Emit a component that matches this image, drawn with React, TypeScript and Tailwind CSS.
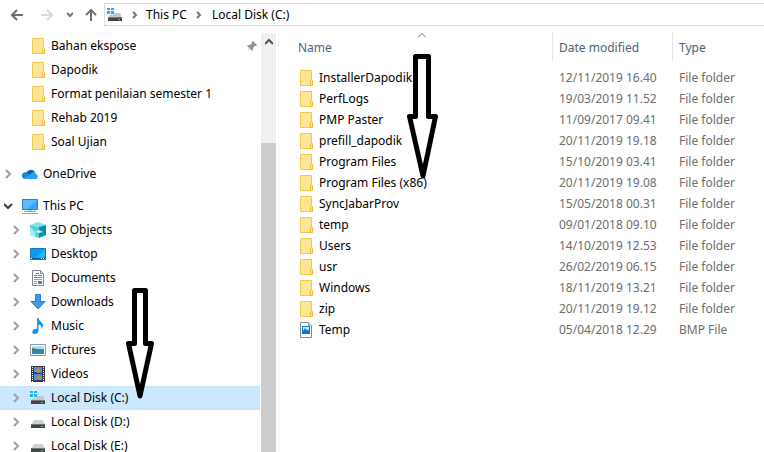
import React from "react";
import clsx from "clsx";

const folders = [
  { name: "InstallerDapodik", date: "12/11/2019 16.40" },
  { name: "PerfLogs", date: "19/03/2019 11.52" },
  { name: "PMP Paster", date: "11/09/2017 09.41" },
  { name: "prefill_dapodik", date: "20/11/2019 19.18" },
  { name: "Program Files", date: "15/10/2019 03.41" },
  { name: "Program Files (x86)", date: "20/11/2019 19.08" },
  { name: "SyncJabarProv", date: "15/05/2018 00.31" },
  { name: "temp", date: "09/01/2018 09.10" },
  { name: "Users", date: "14/10/2019 12.53" },
  { name: "usr", date: "26/02/2019 06.15" },
  { name: "Windows", date: "18/11/2019 13.21" },
  { name: "zip", date: "20/11/2019 19.12" },
  { name: "Temp", date: "05/04/2018 12.29", type: "BMP File" },
];

const quickAccess = [
  "Bahan ekspose",
  "Dapodik",
  "Format penilaian semester 1",
  "Rehab 2019",
  "Soal Ujian",
];

const Icon = ({ children }: { children: React.ReactNode }) => (
  <svg
    width="16"
    height="16"
    viewBox="0 0 16 16"
    className="shrink-0"
    aria-hidden="true"
  >
    {children}
  </svg>
);

const FolderIcon = () => (
  <Icon>
    <path d="M1.500 .5h11v15h-11z" fill="#ffe596" stroke="#efc84e" />
    <path d="M11.500 15.500v-5l1-1 1 1v5z" fill="#ffe596" stroke="#e8bd3f" />
  </Icon>
);

const BmpIcon = () => (
  <Icon>
    <path d="M1.500 .5h8l3 3v12h-11z" fill="#fff" stroke="#8a8a8a" />
    <path d="M9.500 .5v3h3" fill="#ddd" stroke="#a5a5a5" />
    <path d="M3 4h8v8H3z" fill="#0b78d4" />
    <path d="M4 5h6v2L9 9 8 7 7 8 6 6 4 9z" fill="#cde9ff" />
  </Icon>
);

const OneDriveIcon = () => (
  <Icon>
    <path d="M4 7a5 4.500 0 0 1 9-1l-4 4z" fill="#0f5fb8" />
    <path d="M1 12a3.200 3.200 0 0 1 3-5.500c2 0 3 1 5 2.500L3 13z" fill="#1684d8" />
    <path d="M8 9c1-3 5-4 6-1a2.600 2.600 0 0 1 0 5H3c-1 0-2-.5-2-1z" fill="#2ba3ee" />
  </Icon>
);

const ComputerIcon = () => (
  <Icon>
    <path d="M.5 1.500h15v10H.5z" fill="#5dbcff" stroke="#3c7ba8" />
    <path d="M15 2v9H5z" fill="#38a8f8" />
    <path d="M6 12h4v1H6z" fill="#bfd3e0" />
    <path d="M2 13.500h12M0 15.500h16" stroke="#8da0ae" />
  </Icon>
);

const ObjectsIcon = () => (
  <Icon>
    <path d="M0 3l8-3 8 3-7 2z" fill="#7fe3ee" />
    <path d="M0 3l9 2v11l-9-3z" fill="#54cfdc" />
    <path d="M16 3L9 5v11l7-3z" fill="#0a8fa6" />
    <path d="M0 5l5 5v5l-5-2z" fill="#a5edf2" />
    <path d="M5 10l4-2 4 2-4 1z" fill="#c2f5f8" />
  </Icon>
);

const DesktopIcon = () => (
  <Icon>
    <path d="M.5 2.500h15v11H.5z" fill="#0b9bf8" stroke="#1775b8" />
    <path d="M15 3v8L6 12z" fill="#2cb0ff" />
    <path d="M1 12h14v1H1z" fill="#155a91" />
    <path d="M1 12h1v1H1zM11 12h1v1h-1zM13 12h1v1h-1z" fill="#fff" />
  </Icon>
);

const DocumentIcon = () => (
  <Icon>
    <path d="M2.500 .5h8l3 3v12h-11z" fill="#fff" stroke="#7d8a92" />
    <path d="M10.500 .5v3h3" fill="#e8e8e8" stroke="#7d8a92" />
    <path d="M6 3.500h3M4 5.500h3M8 5.500h4M4 7.500h8" stroke="#2c97dc" />
    <path d="M4 9.500h8M4 11.500h3M4 13.500h3" stroke="#6caed8" />
    <path d="M8 11h4v3H8z" fill="#577f93" />
  </Icon>
);

const DownloadIcon = () => (
  <Icon>
    <path d="M5.500 .5h5v7H15L8 15 1 7.500h4.500z" fill="#3d9be9" stroke="#2b7fc8" />
  </Icon>
);

const MusicIcon = () => (
  <Icon>
    <path
      d="M7 0h1.500c0 3 4.500 4 4.500 7.500 0 2-1 3-1.500 3.500.5-3-1-4-3-4.500V13c0 2-2 3-4 3S2 14.500 2.500 13 5 10.500 7 11z"
      fill="#0d97f0"
    />
  </Icon>
);

const PictureIcon = () => (
  <Icon>
    <path d="M.5 2.500h15v11H.5z" fill="#fff" stroke="#8c989f" />
    <path d="M2 4h12v8H2z" fill="#a9dcf8" />
    <path d="M2 6c3 0 5 2 12 1v3H2z" fill="#3d7f7c" />
    <path d="M2 9c5 1 8 0 12-1v4H2z" fill="#3186bd" />
  </Icon>
);

const VideoIcon = () => (
  <Icon>
    <path d="M1 0h14v16H1z" fill="#3a3a3a" />
    <path d="M4 1h8v6H4zM4 8h8v7H4z" fill="#4b8fe2" />
    <path d="M5 4l3-2 3 3-2 2H5zM6 12l3-3 3 3-1 2z" fill="#c7883c" />
    <path d="M4 6h3v1H4zM4 14h8v1H4z" fill="#233f75" />
    <path d="M2.500 1v15M13.500 1v15" stroke="#fff" strokeDasharray="1 1" />
  </Icon>
);

const DiskIcon = ({ windows = false }: { windows?: boolean }) => (
  <Icon>
    <path d="M4 6h9l2 5H1z" fill={windows ? "#c6c6c6" : "#d0d0d0"} />
    <path d="M1 10h14v4H1z" fill="#444" />
    <path d="M1 10h14v1H1z" fill="#777" />
    <path d="M11 12h2v1h-2z" fill="#35e04b" />
    {windows && (
      <>
        <path d="M0 0h7v8H0z" fill="#fff" fillOpacity="0.5" />
        <path d="M0 1h3v2H0zM4 1h3v2H4zM0 4h3v3H0zM4 4h3v3H4z" fill="#14b4f0" />
      </>
    )}
  </Icon>
);

const Chevron = ({ open = false }: { open?: boolean }) => (
  <svg width="10" height="10" viewBox="0 0 10 10" fill="none" aria-hidden="true">
    <path
      d={open ? "M0 3l4 4 4-4" : "M2 1l4 4-4 4"}
      stroke={open ? "#404040" : "#a0a0a0"}
      strokeWidth="2"
    />
  </svg>
);

const Crumb = () => (
  <svg width="6" height="8" viewBox="0 0 6 8" fill="none" aria-hidden="true">
    <path d="M1 1l3 3-3 3" stroke="#777" strokeWidth="2" />
  </svg>
);

const drives = [
  { name: "3D Objects", icon: <ObjectsIcon /> },
  { name: "Desktop", icon: <DesktopIcon /> },
  { name: "Documents", icon: <DocumentIcon /> },
  { name: "Downloads", icon: <DownloadIcon /> },
  { name: "Music", icon: <MusicIcon /> },
  { name: "Pictures", icon: <PictureIcon /> },
  { name: "Videos", icon: <VideoIcon /> },
  { name: "Local Disk (C:)", icon: <DiskIcon windows />, selected: true },
  { name: "Local Disk (D:)", icon: <DiskIcon /> },
  { name: "Local Disk (E:)", icon: <DiskIcon /> },
];

const AddressBar = () => (
  <header className="flex h-[30px] shrink-0 items-start text-black">
    <nav className="flex h-[30px] items-center pl-[11px]" aria-label="History">
      <button aria-label="Back" className="w-[30px]">
        <svg width="12" height="12" viewBox="0 0 12 12" fill="none">
          <path d="M12 6H1M6 1L1 6l5 5" stroke="#6e6e6e" strokeWidth="2" />
        </svg>
      </button>
      <button aria-label="Forward" className="w-[26px]">
        <svg width="12" height="12" viewBox="0 0 12 12" fill="none">
          <path d="M0 6h11M6 1l5 5-5 5" stroke="#dadada" strokeWidth="2" />
        </svg>
      </button>
      <button aria-label="Recent locations" className="w-[18px]">
        <svg width="6" height="6" viewBox="0 0 6 6" fill="none">
          <path d="M0 1l3 3 3-3" stroke="#777" strokeWidth="2" />
        </svg>
      </button>
      <button aria-label="Up" className="w-[19px]">
        <svg width="12" height="12" viewBox="0 0 12 12" fill="none">
          <path d="M6 12V1M1 6l5-5 5 5" stroke="#6e6e6e" strokeWidth="2" />
        </svg>
      </button>
    </nav>
    <nav
      className="mt-[3px] flex h-[23px] flex-1 items-center border border-r-0 border-[#d9d9d9] pl-[2px]"
      aria-label="Address"
    >
      <DiskIcon windows />
      <span className="flex w-[23px] justify-center">
        <Crumb />
      </span>
      <a href="#this-pc">This PC</a>
      <span className="flex w-[25px] justify-center">
        <Crumb />
      </span>
      <a href="#c">Local Disk (C:)</a>
    </nav>
  </header>
);

const Sidebar = () => (
  <aside className="flex w-[279px] shrink-0 border-r border-[#f5f5f5] pt-[3px]">
    <div className="w-[260px] pt-px">
      <ul>
        {quickAccess.map((name, i) => (
          <li key={name} className="flex h-6 items-center gap-1 pl-[31px]">
            <FolderIcon />
            <span>{name}</span>
            {i === 0 && (
              <svg width="10" height="10" viewBox="0 0 10 10" className="mr-[3px] ml-auto">
                <path
                  d="M6 0l4 4-1 1H8L6 7v2L5 10 3 7.500 0 10l2.500-3L0 5l1-1h2l2-2V1z"
                  fill="#8b98a3"
                />
              </svg>
            )}
          </li>
        ))}
      </ul>
      <div className="mt-2 flex h-6 items-center gap-2 pl-1">
        <Chevron />
        <span className="flex items-center gap-[5px]">
          <OneDriveIcon />
          OneDrive
        </span>
      </div>
      <div className="mt-2 flex h-6 items-center gap-2 pl-1">
        <Chevron open />
        <span className="flex items-center gap-[5px]">
          <ComputerIcon />
          This PC
        </span>
      </div>
      <ul>
        {drives.map(({ name, icon, selected }) => (
          <li
            key={name}
            className={clsx("flex h-6 items-center gap-2 pl-3", selected && "bg-[#cce8ff]")}
          >
            <Chevron />
            <span className="flex items-center gap-[5px]">
              {icon}
              {name}
            </span>
          </li>
        ))}
      </ul>
    </div>
    {/* Scrollbar */}
    <div className="ml-px w-[15px] bg-[#f0f0f0]">
      <div className="flex h-[110px] justify-center pt-[5px]">
        <svg width="8" height="8" viewBox="0 0 8 8" fill="none">
          <path d="M0 6l4-4 4 4" stroke="#505050" strokeWidth="2" />
        </svg>
      </div>
      <div className="h-full bg-[#cdcdcd]" />
    </div>
  </aside>
);

const FileTable = () => (
  <table className="w-full table-fixed border-collapse text-left">
    <colgroup>
      <col className="w-[273px]" />
      <col className="w-[120px]" />
      <col />
    </colgroup>
    <thead className="text-[#4c607a]">
      <tr className="h-[37px] align-top">
        <th className="relative pt-[3px] pl-[19px] font-normal">
          <svg
            width="8"
            height="5"
            viewBox="0 0 8 5"
            fill="none"
            className="absolute top-[3px] left-[139px]"
            aria-hidden="true"
          >
            <path d="M0 4.500l4-4 4 4" stroke="#777" />
          </svg>
          <div className="flex h-7 items-center pt-px">Name</div>
        </th>
        <th className="pt-[3px] font-normal">
          <div className="flex h-7 items-center border-l border-[#e5e5e5] pt-px pl-[6px]">
            Date modified
          </div>
        </th>
        <th className="pt-[3px] font-normal">
          <div className="flex h-7 items-center border-l border-[#e5e5e5] pt-px pl-[6px]">
            Type
          </div>
        </th>
      </tr>
    </thead>
    <tbody className="text-[#6d6d6d]">
      {folders.map(({ name, date, type }) => (
        <tr key={name} className="h-[21px]">
          <td className="pl-5 text-black">
            <span className="flex items-center gap-1">
              {type ? <BmpIcon /> : <FolderIcon />}
              {name}
            </span>
          </td>
          <td className="pl-[7px]">{date}</td>
          <td className="pl-[7px]">{type ?? "File folder"}</td>
        </tr>
      ))}
    </tbody>
  </table>
);

const App = () => {
  return (
    <div className="relative flex h-screen flex-col overflow-hidden bg-white font-['Noto_Sans',sans-serif] text-xs leading-4 whitespace-nowrap">
      <AddressBar />
      <main className="flex min-h-0 flex-1 overflow-hidden">
        <Sidebar />
        <section className="min-w-0 flex-1">
          <FileTable />
        </section>
      </main>
      {/* Hand-drawn arrows */}
      <svg
        width="34"
        height="116"
        viewBox="0 0 34 116"
        className="absolute top-[286px] left-[124px]"
        aria-hidden="true"
      >
        <path
          d="M10.500 4.500h11v53h6L16 110 4.500 57.500h6z"
          fill="#fff"
          stroke="#000"
          strokeWidth="5"
          strokeLinejoin="round"
        />
      </svg>
      <svg
        width="34"
        height="130"
        viewBox="0 0 34 130"
        className="absolute top-[52px] left-[406px]"
        aria-hidden="true"
      >
        <path
          d="M9.500 4.500h13v60h7L17 124 3.500 64.500h6z"
          fill="#fff"
          stroke="#000"
          strokeWidth="5"
          strokeLinejoin="round"
        />
      </svg>
    </div>
  );
};

export default App;
